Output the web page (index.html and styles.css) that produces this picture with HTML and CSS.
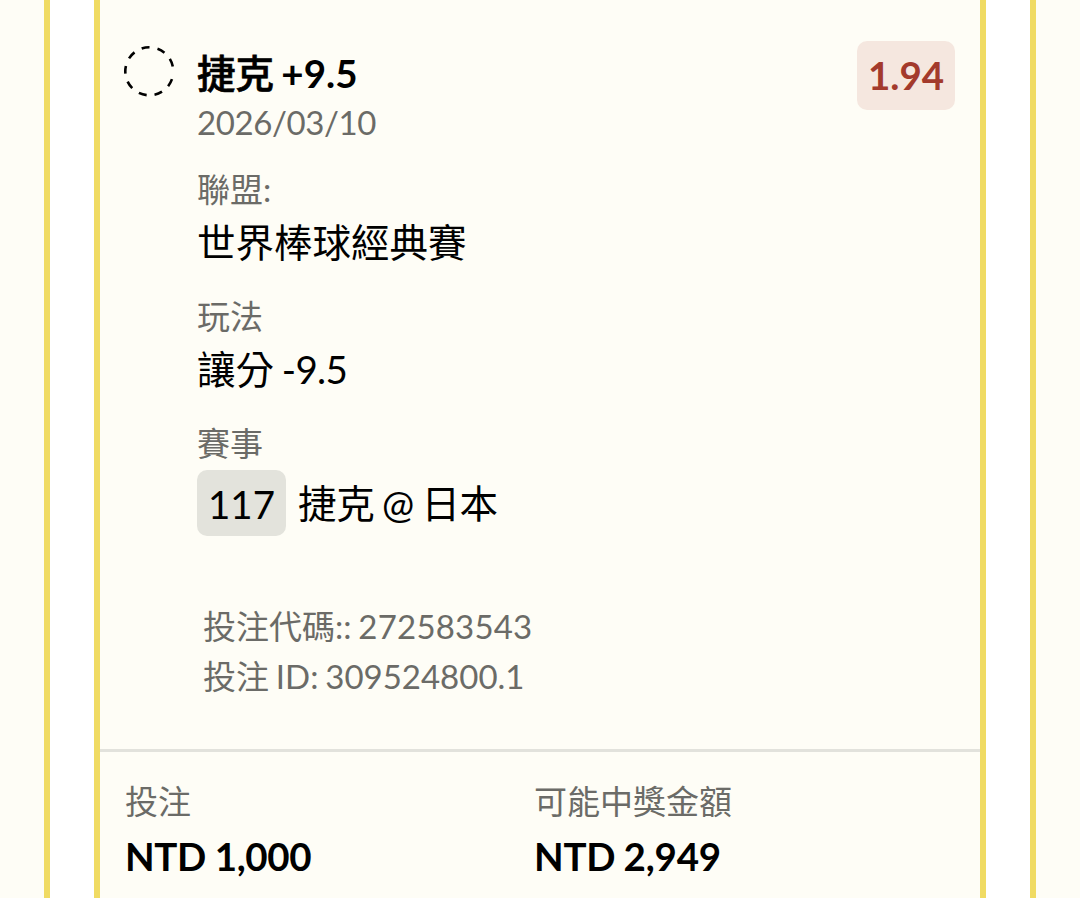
FILE: index.html
```html
<!DOCTYPE html>
<html lang="zh-Hant">
<head>
    <meta charset="UTF-8">
    <meta name="viewport" content="width=device-width, initial-scale=1.0">
    <title>投注</title>
    <link rel="stylesheet" href="styles.css">
</head>
<body>
    <div class="panel">
        <div class="ticket">
            <div class="selection">
                <svg class="status" width="52" height="52" viewBox="0 0 52 52">
                    <circle cx="26.3" cy="26.3" r="24" fill="none" stroke="#000" stroke-width="2.6" stroke-dasharray="8 8.1" stroke-dashoffset="-8"/>
                </svg>
                <div class="details">
                    <h2 class="pick"><span class="team">捷克</span> +9.5</h2>
                    <p class="date">2026/03/10</p>
                    <p class="label">聯盟:</p>
                    <p class="value">世界棒球經典賽</p>
                    <p class="label">玩法</p>
                    <p class="value">讓分 <span class="handicap">-9.5</span></p>
                    <p class="label">賽事</p>
                    <p class="value match"><span class="number">117</span><span class="teams">捷克 @ 日本</span></p>
                    <div class="codes">
                        <p>投注代碼:: <span class="code">272583543</span></p>
                        <p>投注 ID: 309524800.1</p>
                    </div>
                </div>
                <span class="odds">1.94</span>
            </div>
            <div class="totals">
                <div class="total">
                    <p class="label">投注</p>
                    <p class="amount">NTD 1,000</p>
                </div>
                <div class="total">
                    <p class="label">可能中獎金額</p>
                    <p class="amount payout">NTD 2,949</p>
                </div>
            </div>
        </div>
    </div>
</body>
</html>
```
FILE: styles.css
```css
* {
    box-sizing: border-box;
}

body {
    margin: 0;
    height: 898px;
    padding: 0 44px;
    overflow: hidden;
    background-color: #fefdf6;
    color: #000;
    font-family: Lato, "Noto Sans CJK TC", sans-serif;
    font-size: 38.5px;
}

h2, p {
    margin: 0;
}

.panel {
    height: 898px;
    padding: 0 44px;
    background-color: white;
    border-left: 6px solid #f0db63;
    border-right: 6px solid #f0db63;
}

.ticket {
    height: 898px;
    background-color: #fefdf6;
    border-left: 6px solid #f0db63;
    border-right: 6px solid #f0db63;
}

.selection {
    display: flex;
    align-items: flex-start;
    height: 752px;
    padding: 41px 25px 0 23px;
    border-bottom: 3px solid #e2e2dc;
}

.status {
    flex: none;
    margin-top: 4px;
}

.details {
    flex: 1;
    padding: 4px 0 0 22px;
}

.pick {
    font-size: 38.5px;
    line-height: 56px;
    font-weight: bold;
    word-spacing: -2px;
}

.team {
    font-weight: 500;
    -webkit-text-stroke: 0.7px #000;
}

.date {
    color: #6b6b67;
    font-size: 33px;
    line-height: 42px;
    letter-spacing: -0.4px;
}

.label {
    margin-top: 23px;
    color: #6b6b67;
    font-size: 33px;
    line-height: 47px;
}

.value {
    padding-top: 1px;
    line-height: 56px;
    word-spacing: -2px;
}

.handicap {
    letter-spacing: -0.7px;
}

.match {
    display: flex;
    align-items: center;
    gap: 12px;
    height: 69px;
    padding-top: 3px;
}

.number {
    width: 89px;
    border-radius: 10px;
    background-color: #e3e3dc;
    line-height: 66px;
    padding-top: 1px;
    height: 66px;
    text-align: center;
}

.teams {
    letter-spacing: -0.3px;
    word-spacing: -2px;
}

.codes {
    padding: 65px 0 0 6px;
    color: #6b6b67;
    font-size: 33px;
    line-height: 50px;
    word-spacing: -1.6px;
}

.code {
    letter-spacing: 0.2px;
}

.odds {
    width: 98px;
    border-radius: 10px;
    background-color: #f5e7df;
    color: #a33a2c;
    font-weight: bold;
    line-height: 69px;
    text-align: center;
}

.totals {
    display: flex;
    padding: 26px 25px 0;
}

.total {
    width: 409px;
}

.totals .label {
    margin: 0;
}

.amount {
    padding-top: 1px;
    font-weight: bold;
    line-height: 60px;
    letter-spacing: -0.4px;
}

.payout {
    letter-spacing: -0.2px;
    word-spacing: -1px;
}
```
